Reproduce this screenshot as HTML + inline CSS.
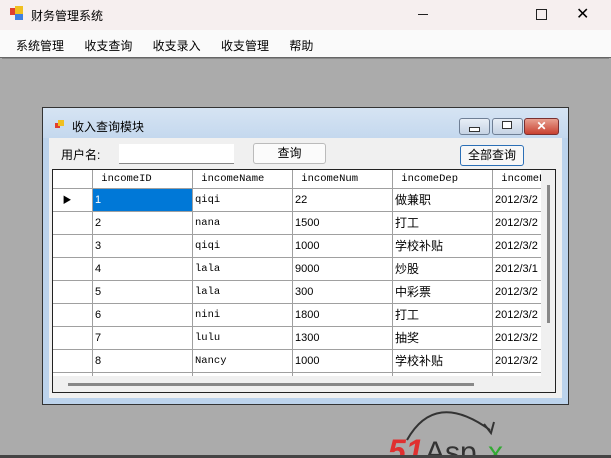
<html><head><style>
body{margin:0;width:611px;height:458px;overflow:hidden;position:relative;font-family:"Liberation Sans","Noto Sans CJK SC",sans-serif;font-size:12px;background:#ababab}
.a{position:absolute}
.c{position:absolute;height:22px;line-height:22px;font-size:11px;white-space:nowrap;overflow:hidden;padding-left:2px;box-sizing:border-box;border-right:1px solid #a0a0a0;border-bottom:1px solid #a0a0a0;background:#fff}
.m{font-family:"Liberation Mono",monospace;font-size:10.5px}
.z{font-size:12px}
</style></head><body>
<div class="a" style="left:0;top:0;width:611px;height:30px;background:#f6efef"></div>
<div class="a" style="left:10px;top:8px;width:7px;height:7px;background:#e04030"></div>
<div class="a" style="left:15px;top:6px;width:8px;height:8px;background:#f0c020"></div>
<div class="a" style="left:15px;top:14px;width:8px;height:6px;background:#4080e0"></div>
<div class="a" style="left:31px;top:7px;font-size:12px">财务管理系统</div>
<div class="a" style="left:418px;top:14px;width:10px;height:1px;background:#222"></div>
<div class="a" style="left:536px;top:9px;width:9px;height:9px;border:1px solid #222"></div>
<div class="a" style="left:576px;top:4px;font-size:16px">✕</div>
<div class="a" style="left:0;top:30px;width:611px;height:27px;background:#fafafa"></div>
<div class="a" style="left:16px;top:37px;font-size:12px;word-spacing:17px">系统管理 收支查询 收支录入 收支管理 帮助</div>
<div class="a" style="left:0;top:57px;width:611px;height:1px;background:#666"></div>
<div class="a" style="left:2px;top:58px;width:607px;height:1px;background:#888"></div>

<div class="a" style="left:42px;top:107px;width:525px;height:296px;border:1px solid #333;background:#bcd3ec"></div>
<div class="a" style="left:43px;top:108px;width:525px;height:30px;background:linear-gradient(#d6e4f3,#c4d8ee)"></div>
<div class="a" style="left:55px;top:123px;width:5px;height:5px;background:#e04030"></div>
<div class="a" style="left:58px;top:120px;width:6px;height:6px;background:#f0c020"></div>
<div class="a" style="left:72px;top:118px">收入查询模块</div>
<div class="a" style="left:459px;top:118px;width:29px;height:15px;border:1px solid #6f7f95;border-radius:3px;background:linear-gradient(#e8eef6,#c6d3e4)"></div>
<div class="a" style="left:469px;top:127px;width:9px;height:3px;border:1px solid #333;background:#fff"></div>
<div class="a" style="left:492px;top:118px;width:29px;height:15px;border:1px solid #6f7f95;border-radius:3px;background:linear-gradient(#e8eef6,#c6d3e4)"></div>
<div class="a" style="left:502px;top:121px;width:8px;height:6px;border:1px solid #333;background:#fff"></div>
<div class="a" style="left:524px;top:118px;width:33px;height:15px;border:1px solid #7a3030;border-radius:3px;background:linear-gradient(#e8a090,#c84030);color:#fff;text-align:center;font-size:12px;line-height:15px;font-weight:bold">✕</div>
<div class="a" style="left:49px;top:138px;width:513px;height:260px;background:#f0f0f0"></div>
<div class="a" style="left:61px;top:146px">用户名:</div>
<div class="a" style="left:119px;top:144px;width:115px;height:19px;background:#fff;border-bottom:1px solid #888"></div>
<div class="a" style="left:253px;top:143px;width:71px;height:19px;border:1px solid #bbb;border-radius:3px;background:#fbfbfb;text-align:center;line-height:19px">查询</div>
<div class="a" style="left:460px;top:145px;width:62px;height:19px;border:1px solid #2b6fb6;border-radius:3px;background:#f7f7f7;text-align:center;line-height:19px">全部查询</div>

<div class="a" style="left:52px;top:169px;width:502px;height:222px;border:1px solid #222;background:#f0f0f0;overflow:hidden">
<div style="position:absolute;left:0;top:0;width:488px;height:206px;overflow:hidden">
<!-- header -->
<div class="c" style="left:0;top:0;width:40px;height:19px"></div>
<div class="c m" style="left:40px;top:0;width:100px;height:19px;line-height:18px">&nbsp;incomeID</div>
<div class="c m" style="left:140px;top:0;width:100px;height:19px;line-height:18px">&nbsp;incomeName</div>
<div class="c m" style="left:240px;top:0;width:100px;height:19px;line-height:18px">&nbsp;incomeNum</div>
<div class="c m" style="left:340px;top:0;width:100px;height:19px;line-height:18px">&nbsp;incomeDep</div>
<div class="c m" style="left:440px;top:0;width:48px;height:19px;line-height:18px;border-right:0">&nbsp;incomeD</div>
</div>
<div id="g" style="position:absolute;left:0;top:19px;width:488px;height:187px;overflow:hidden"></div>
</div>
<script>
var d=[["1","qiqi","22","做兼职","2012/3/2"],["2","nana","1500","打工","2012/3/2"],["3","qiqi","1000","学校补贴","2012/3/2"],["4","lala","9000","炒股","2012/3/1"],["5","lala","300","中彩票","2012/3/2"],["6","nini","1800","打工","2012/3/2"],["7","lulu","1300","抽奖","2012/3/2"],["8","Nancy","1000","学校补贴","2012/3/2"],["","","","",""]];
var h="";
d.forEach(function(r,i){var t=i*23;
h+='<div class="c" style="left:0;top:'+t+'px;width:40px;height:23px;font-size:9px;line-height:23px">'+(i==0?'&nbsp;&nbsp;&nbsp;▶':'')+'</div>';
h+='<div class="c" style="left:40px;top:'+t+'px;width:100px;height:23px;line-height:23px;'+(i==0?'background:#0078d7;color:#fff':'')+'">'+r[0]+'</div>';
h+='<div class="c m" style="left:140px;top:'+t+'px;width:100px;height:23px;line-height:23px">'+r[1]+'</div>';
h+='<div class="c" style="left:240px;top:'+t+'px;width:100px;height:23px;line-height:23px">'+r[2]+'</div>';
h+='<div class="c z" style="left:340px;top:'+t+'px;width:100px;height:23px;line-height:23px">'+r[3]+'</div>';
h+='<div class="c" style="left:440px;top:'+t+'px;width:48px;height:23px;line-height:23px;border-right:0">'+r[4]+'</div>';
});
document.getElementById('g').innerHTML=h;
</script>
<div class="a" style="left:547px;top:185px;width:3px;height:138px;background:#888"></div>
<div class="a" style="left:53px;top:376px;width:488px;height:15px;background:#f0f0f0"></div>
<div class="a" style="left:68px;top:383px;width:406px;height:3px;background:#888"></div>

<svg class="a" style="left:380px;top:400px" width="140" height="58">
<path d="M27 40 Q55 -10 110 30" fill="none" stroke="#333" stroke-width="2"/>
<path d="M104 24 L111 33 L114 22" fill="none" stroke="#333" stroke-width="2"/>
<text x="8" y="62" font-family="Liberation Sans" font-style="italic" font-weight="bold" font-size="32" fill="#e03030">51</text>
<text x="45" y="62" font-family="Liberation Sans" font-size="30" fill="#333">Asp</text>
<text x="108" y="62" font-family="Liberation Sans" font-size="30" fill="#3a3">x</text>
</svg>
<div class="a" style="left:0;top:455px;width:611px;height:3px;background:#444"></div>
</body></html>
